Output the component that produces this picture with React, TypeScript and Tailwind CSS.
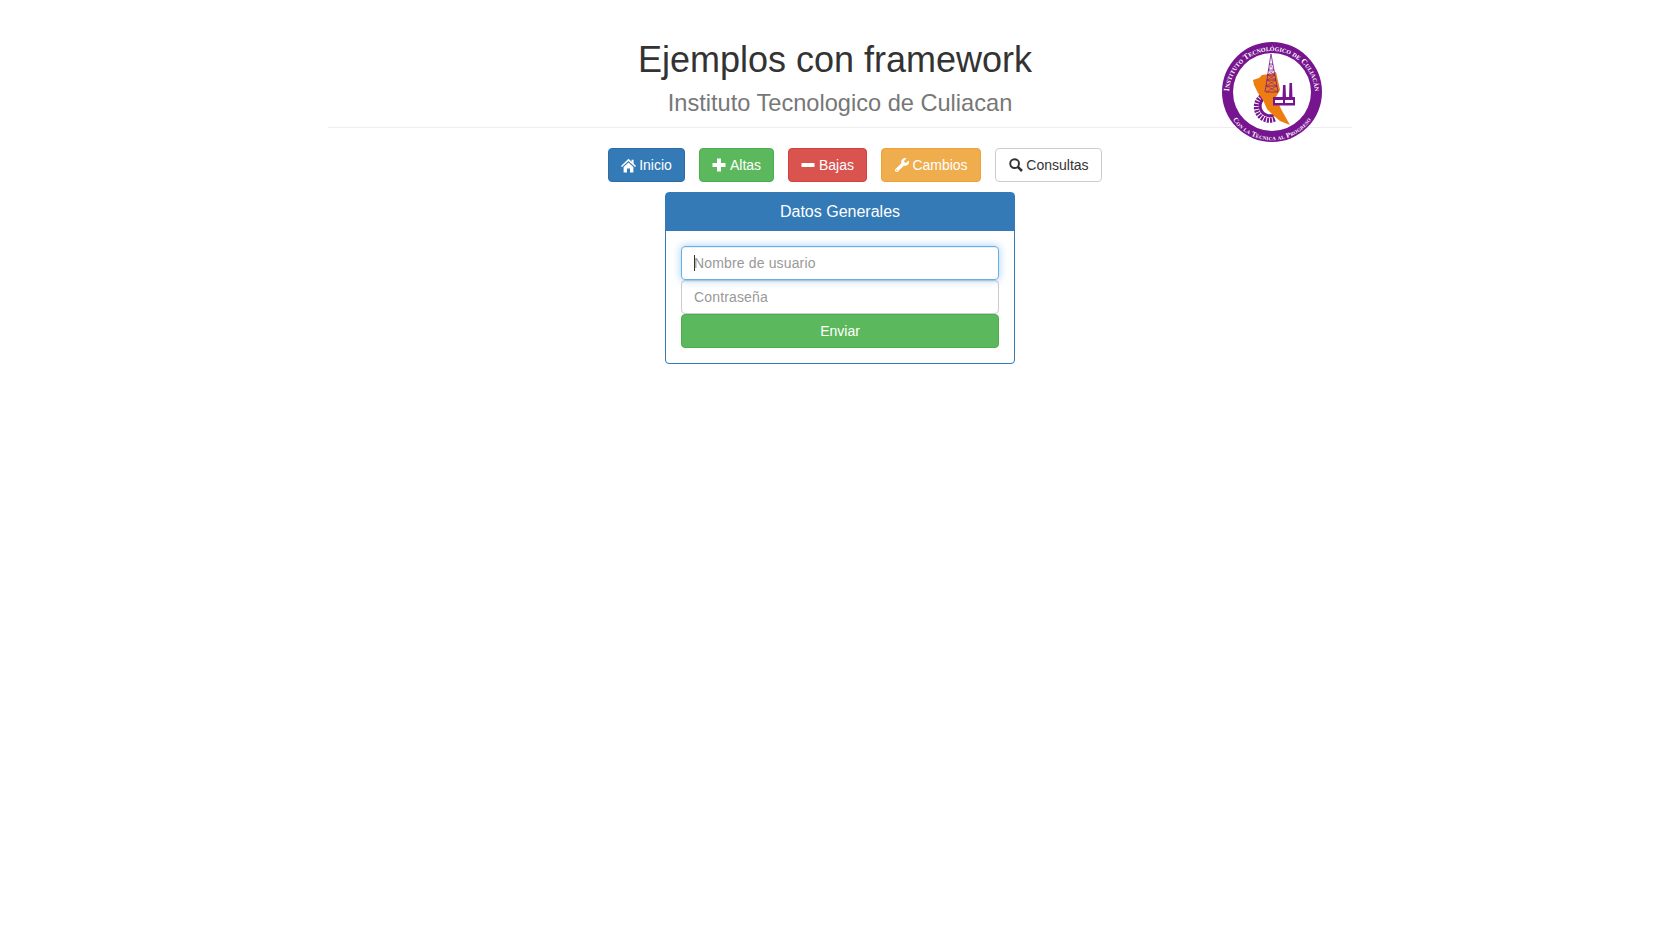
import { FaWrench } from 'react-icons/fa';
import type { ReactNode } from 'react';

const HomeIcon = () => (
  <svg viewBox="0 0 15 15" className="h-[15px] w-[15px]" fill="currentColor">
    <path d="M7.5 .8 L10.6 3.7 V1.8 H12.6 V5.6 L15 7.9 L14 9 L7.5 3 L1 9 L0 7.9 Z" />
    <path d="M2.6 8.9 L7.5 4.4 L12.4 8.9 V14.5 H9 V10.4 H6 V14.5 H2.6 Z" />
  </svg>
);

const PlusIcon = () => (
  <svg viewBox="0 0 14 14" className="h-[14px] w-[14px]" fill="currentColor">
    <path d="M5 .5 H9 V5 H13.5 V9 H9 V13.5 H5 V9 H.5 V5 H5 Z" />
  </svg>
);

const MinusIcon = () => (
  <svg viewBox="0 0 14 14" className="h-[14px] w-[14px]" fill="currentColor">
    <rect x="0.5" y="5" width="13" height="4" rx="0.6" />
  </svg>
);

const SearchIcon = () => (
  <svg viewBox="0 0 14 14" className="-mt-px h-[14px] w-[14px]" fill="none" stroke="currentColor">
    <circle cx="5.6" cy="5.6" r="4.4" strokeWidth="1.9" />
    <path d="M8.8 8.8 L13 13" strokeWidth="2.6" />
  </svg>
);

const Logo = () => (
  <svg viewBox="0 0 100 100" className="absolute left-[894px] top-[42px] h-[100px] w-[100px]">
    <defs>
      <path id="arcTop" d="M 8.2 62 A 43 43 0 1 1 91.8 62" />
      <path id="arcBottom" d="M 5 66 A 47.5 47.5 0 0 0 95 66" />
    </defs>
    <circle cx="50" cy="50" r="50" fill="#76158f" />
    <circle cx="50" cy="50" r="39" fill="#fff" />
    <text fontFamily="'Liberation Serif', serif" fontSize="8" fontWeight="700" fontVariant="small-caps" fill="#fff">
      <textPath href="#arcTop" startOffset="50%" textAnchor="middle">
        Instituto Tecnológico de Culiacán
      </textPath>
    </text>
    <text fontFamily="'Liberation Serif', serif" fontSize="7" fontWeight="700" fontVariant="small-caps" fill="#fff" letterSpacing="0.2">
      <textPath href="#arcBottom" startOffset="50%" textAnchor="middle">
        Con la Técnica al Progreso
      </textPath>
    </text>
    {/* engrane */}
    <path d="M42 53 A 12 12 0 1 0 53 77" fill="none" stroke="#76158f" strokeWidth="5" strokeDasharray="2 1" />
    <path d="M44 55 A 9.5 9.5 0 1 0 52 73" fill="none" stroke="#76158f" strokeWidth="3" />
    {/* sinaloa */}
    <polygon points="31,38 37,36 40,33 47,32 54,30 58,48 54,55 59,67 68,83 58,79 51,73 45,67 41,58 36,51 32,43" fill="#ee7d11" />
    {/* torre */}
    <g stroke="#76158f" fill="none">
      <path d="M49 12 L43 50 M49 12 L56 50 M47 22 H51 M46 28 H52 M45.5 33 H53 M45 38 H54 M44 44 H55 M44 50 H56" strokeWidth="0.8" />
      <path d="M47 22 L52 28 M51 22 L46 28 M46 28 L53 33 M52 28 L45.5 33 M45.5 33 L54 38 M53 33 L45 38 M45 38 L55 44 M54 38 L44 44 M44 44 L56 50 M55 44 L44 50" strokeWidth="0.5" />
    </g>
    {/* fabrica */}
    <polygon points="61,43 63.5,43 64,56 60.5,56" fill="#76158f" />
    <polygon points="67.5,41 70,41 70.5,56 67,56" fill="#76158f" />
    <rect x="51" y="55" width="22" height="8.5" fill="#76158f" />
    <rect x="53" y="58" width="8" height="3" fill="#fff" />
    <rect x="63" y="58" width="8" height="3" fill="#fff" />
  </svg>
);

const NavButton = ({ className, icon, label }: { className: string; icon: ReactNode; label: string }) => (
  <button className={`flex h-[34px] items-center justify-center rounded border text-sm ${className}`}>
    <span className="mr-[3px] flex w-[15px] justify-center">{icon}</span>
    {label}
  </button>
);

const App = () => {
  return (
    <div className="min-h-[949px] bg-white font-['Liberation_Sans',Arial,sans-serif] text-sm text-[#333]">
      <div className="relative mx-auto w-[1024px]">
        <header className="border-b border-[#eee] pb-[11px] pt-10 text-center">
          <h1 className="pr-[10px] text-[36px] leading-[40px]">Ejemplos con framework</h1>
          <h2 className="mt-[10px] text-[23.6px] leading-[26px] text-[#777]">Instituto Tecnologico de Culiacan</h2>
        </header>
        <Logo />
        <nav className="mt-5 flex justify-center gap-[14px] pl-[30px]">
          <NavButton className="w-[77px] border-[#2e6da4] bg-[#337ab7] text-white" icon={<HomeIcon />} label="Inicio" />
          <NavButton className="w-[75px] border-[#4cae4c] bg-[#5cb85c] text-white" icon={<PlusIcon />} label="Altas" />
          <NavButton className="w-[79px] border-[#d43f3a] bg-[#d9534f] text-white" icon={<MinusIcon />} label="Bajas" />
          <NavButton className="w-[100px] border-[#eea236] bg-[#f0ad4e] text-white" icon={<FaWrench size={14} className="-mt-px" />} label="Cambios" />
          <NavButton className="w-[107px] border-[#ccc] bg-white text-[#333]" icon={<SearchIcon />} label="Consultas" />
        </nav>
        <section className="mx-auto mt-[10px] w-[350px] rounded border border-[#337ab7]">
          <div className="flex h-[38px] items-center justify-center bg-[#337ab7] text-base text-white">Datos Generales</div>
          <div className="flex flex-col p-[15px]">
            <div className="relative">
              <input
                placeholder="Nombre de usuario"
                className="h-[34px] w-full rounded border border-[#66afe9] px-3 tracking-[0.15px] shadow-[inset_0_1px_1px_rgba(0,0,0,0.075),0_0_8px_rgba(102,175,233,0.6)] outline-none placeholder:text-[#999]"
              />
              <span className="absolute left-[13px] top-[9px] h-4 w-px bg-[#333]" />
            </div>
            <input
              placeholder="Contraseña"
              className="h-[34px] w-full rounded border border-[#ccc] px-3 tracking-[0.15px] shadow-[inset_0_1px_1px_rgba(0,0,0,0.075)] outline-none placeholder:text-[#999]"
            />
            <button className="h-[34px] w-full rounded border border-[#4cae4c] bg-[#5cb85c] text-white">Enviar</button>
          </div>
        </section>
      </div>
    </div>
  );
};

export default App;
